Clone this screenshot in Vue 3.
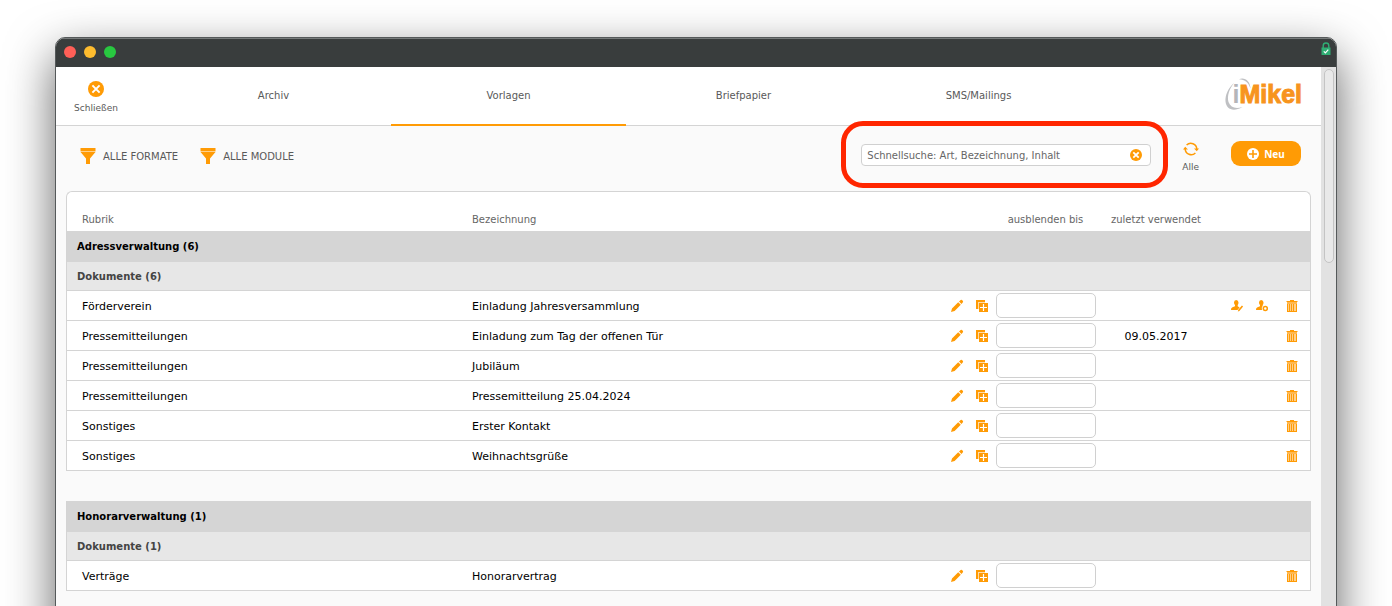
<script setup>
import { ref } from 'vue'

const tabs = ['Archiv', 'Vorlagen', 'Briefpapier', 'SMS/Mailings']
const active = ref('Vorlagen')
const query = ref('')

const sections = [
  {
    title: 'Adressverwaltung (6)',
    sub: 'Dokumente (6)',
    rows: [
      { rubric: 'Förderverein', name: 'Einladung Jahresversammlung', used: '', people: true },
      { rubric: 'Pressemitteilungen', name: 'Einladung zum Tag der offenen Tür', used: '09.05.2017' },
      { rubric: 'Pressemitteilungen', name: 'Jubiläum', used: '' },
      { rubric: 'Pressemitteilungen', name: 'Pressemitteilung 25.04.2024', used: '' },
      { rubric: 'Sonstiges', name: 'Erster Kontakt', used: '' },
      { rubric: 'Sonstiges', name: 'Weihnachtsgrüße', used: '' },
    ],
  },
  {
    title: 'Honorarverwaltung (1)',
    sub: 'Dokumente (1)',
    rows: [{ rubric: 'Verträge', name: 'Honorarvertrag', used: '' }],
  },
]
</script>

<template>
  <div class="desktop">
    <div class="window">
      <div class="titlebar">
        <span class="dot red"></span>
        <span class="dot yellow"></span>
        <span class="dot green"></span>
        <svg class="lock" width="10" height="14" viewBox="0 0 10 14">
          <path d="M2.2 6V3.8a2.8 2.8 0 0 1 5.6 0V6" fill="none" stroke="#2fae74" stroke-width="1.4" />
          <rect x="0.5" y="5.5" width="9" height="7.5" fill="#2fae74" />
          <path d="M2.8 9.3l1.6 1.6 2.9-3.2" fill="none" stroke="#fff" stroke-width="1.2" />
        </svg>
      </div>

      <div class="body">
        <main class="page">
          <header class="head">
            <button class="close" type="button">
              <svg width="16" height="16" viewBox="0 0 16 16">
                <circle cx="8" cy="8" r="8" fill="#ff9b05" />
                <path d="M4.4 4.4l7.2 7.2M11.6 4.4l-7.2 7.2" stroke="#fff" stroke-width="2" />
              </svg>
              <span>Schließen</span>
            </button>
            <nav class="tabs">
              <a
                v-for="t in tabs"
                :key="t"
                href="#"
                class="tab"
                :class="{ active: t === active }"
                @click.prevent="active = t"
              >{{ t }}</a>
            </nav>
            <div class="brand">
              <div class="logo">
                <svg class="swoosh" width="28" height="36" viewBox="0 0 28 36">
                  <path d="M14 2.200C20 0 25 4 25.500 11.500C23.500 5.500 20 2.500 14 2.200Z" fill="#bfc0c3" />
                  <path d="M9 6C3 11 0 18.500 .5 24.500C1.200 32 8 35.500 17.500 30C10.500 32.300 5.500 30.500 3.500 25C1.800 19 4.500 11.500 9 6Z" fill="#bfc0c3" />
                </svg>
                <span class="logo-i">i</span><span class="logo-m">Mikel</span>
              </div>
            </div>
          </header>

          <section class="toolbar">
            <button v-for="f in ['ALLE FORMATE', 'ALLE MODULE']" :key="f" class="filter" type="button">
              <svg width="16" height="16" viewBox="0 0 16 16">
                <path d="M0.500 0h15v3h-15zM0.500 4h15L10 10.500V16H6v-5.500z" fill="#ff9b05" />
                <path d="M0.500 3h15v1h-15z" fill="#ffd08a" />
              </svg>
              <span>{{ f }}</span>
            </button>
            <div class="search">
              <input v-model="query" type="text" aria-label="Schnellsuche" placeholder="Schnellsuche: Art, Bezeichnung, Inhalt" />
              <button class="clear" type="button" aria-label="Suche löschen" @click="query = ''">
                <svg width="12" height="12" viewBox="0 0 12 12">
                  <circle cx="6" cy="6" r="6" fill="#ff9b05" />
                  <path d="M3.300 3.300l5.400 5.400M8.700 3.300l-5.400 5.400" stroke="#fff" stroke-width="1.800" />
                </svg>
              </button>
              <div class="marker"></div>
            </div>
            <button class="all" type="button">
              <svg width="16" height="14" viewBox="0 0 16 14" fill="none" stroke="#ff9b05" stroke-width="1.500">
                <path d="M3.600 3A6 6 0 0 1 13.800 7M12.400 11A6 6 0 0 1 2.200 7" />
                <path d="M0 7.400L2.200 4.800 5 7.400zM16 6.600L13.800 9.200 11 6.600z" fill="#ff9b05" stroke="none" />
              </svg>
              <span>Alle</span>
            </button>
            <button class="new" type="button">
              <svg width="12" height="12" viewBox="0 0 12 12">
                <circle cx="6" cy="6" r="6" fill="#fff" />
                <path d="M6 2v8M2 6h8" stroke="#ff9b05" stroke-width="1.600" />
              </svg>
              <span>Neu</span>
            </button>
          </section>

          <table class="list">
            <colgroup>
              <col class="c-rubric" /><col /><col class="c-icon" /><col class="c-icon" /><col class="c-hide" />
              <col class="c-used" /><col class="c-person" /><col class="c-icon" /><col class="c-trash" />
            </colgroup>
            <thead>
              <tr>
                <th class="text">Rubrik</th>
                <th class="text">Bezeichnung</th>
                <th colspan="2"></th>
                <th>ausblenden bis</th>
                <th>zuletzt verwendet</th>
                <th colspan="3"></th>
              </tr>
            </thead>
            <tbody v-for="(s, si) in sections" :key="s.title">
              <tr v-if="si" class="gap"><td colspan="9"></td></tr>
              <tr class="group"><th colspan="9">{{ s.title }}</th></tr>
              <tr class="sub"><th colspan="9">{{ s.sub }}</th></tr>
              <tr v-for="(r, i) in s.rows" :key="i" class="row">
                <td class="text">{{ r.rubric }}</td>
                <td class="text">{{ r.name }}</td>
                <td>
                  <button type="button" aria-label="Bearbeiten">
                    <svg width="14" height="14" viewBox="0 0 14 14" fill="#ff9b05">
                      <path d="M1 13l1-3.600L8.200 3.200l2.600 2.600L4.600 12zM9 2.500L10.700.9q.7-.4 1.300.2l.9.9q.5.600 0 1.300L11.500 5z" />
                    </svg>
                  </button>
                </td>
                <td>
                  <button type="button" aria-label="Duplizieren">
                    <svg width="14" height="14" viewBox="0 0 14 14">
                      <path d="M1 1h9v2H3v7H1z" fill="#ff9b05" />
                      <path d="M3 3h7v1H4v6H3z" fill="#ffdca8" />
                      <rect x="4" y="4" width="9" height="9" fill="#ff9b05" />
                      <path d="M8.500 5v7M5 8.500h7" stroke="#fff" stroke-width="1.200" />
                    </svg>
                  </button>
                </td>
                <td><input type="text" :aria-label="'ausblenden bis – ' + r.name" /></td>
                <td class="used">{{ r.used }}</td>
                <td class="person">
                  <button v-if="r.people" type="button" aria-label="Person bearbeiten">
                    <svg width="14" height="14" viewBox="0 0 14 14" fill="#ff9b05">
                      <path d="M4 3.500Q4 1 6.200 1T8.500 3.500Q8.500 5 7.700 6v1.300L9.600 8.400 7.500 11H1Q.8 8.800 2.500 8.300L5 7.300V6Q4 5 4 3.500z" />
                      <path d="M7.800 12.500l.5-1.700 3.600-4.300 1.200 1.100-3.700 4.300z" />
                    </svg>
                  </button>
                </td>
                <td>
                  <button v-if="r.people" type="button" aria-label="Person einstellen">
                    <svg width="14" height="14" viewBox="0 0 14 14" fill="#ff9b05">
                      <path d="M4 3.500Q4 1 6.200 1T8.500 3.500Q8.500 5 7.700 6v.8Q6.200 8.500 7 11H1Q.8 8.800 2.500 8.300L5 7.300V6Q4 5 4 3.500z" />
                      <circle cx="10.300" cy="9.500" r="2" fill="none" stroke="#ff9b05" stroke-width="1.500" />
                    </svg>
                  </button>
                </td>
                <td>
                  <button type="button" aria-label="Löschen">
                    <svg width="14" height="14" viewBox="0 0 14 14">
                      <path d="M5 1h4v1h3.500v1h-11V2H5z" fill="#ff9b05" />
                      <path d="M2 4h10v9H2z" fill="#ffcf8a" />
                      <path d="M2.500 4v9M4.500 4v9M6.500 4v9M8.500 4v9M11.500 4v9M2 12.500h10" stroke="#ff9b05" fill="none" />
                      <path d="M2 3h10v2H2z" fill="#ffb850" />
                    </svg>
                  </button>
                </td>
              </tr>
            </tbody>
          </table>
        </main>
        <div class="scroll"><div class="thumb"></div></div>
      </div>
    </div>
  </div>
</template>

<style>
body {
  background: #fff;
}
</style>

<style scoped>
* {
  box-sizing: border-box;
}
.desktop {
  height: 100vh;
  overflow: hidden;
  padding: 37px 55px 0;
  font-family: Verdana, "DejaVu Sans", sans-serif;
  font-size: 11px;
  color: #000;
}
button {
  border: 0;
  padding: 0;
  background: none;
  font: inherit;
  color: inherit;
}
svg {
  display: block;
}
.window {
  height: 100vh;
  display: flex;
  flex-direction: column;
  border: 1px solid #55595a;
  border-radius: 10px;
  overflow: hidden;
  background: #fafafa;
  box-shadow: 0 18px 48px rgba(0, 0, 0, 0.62);
}
.titlebar {
  flex: none;
  height: 29px;
  display: flex;
  align-items: center;
  gap: 8px;
  padding: 0 5px 2px 8px;
  background: #393d3d;
  border-top: 1px solid #777b7b;
}
.dot {
  width: 12px;
  height: 12px;
  border-radius: 50%;
}
.red { background: #ff5f57; }
.yellow { background: #febc2e; }
.green { background: #28c840; }
.lock {
  margin: 0 0 6px auto;
}
.body {
  flex: 1;
  display: flex;
}
.page {
  flex: 1;
  min-width: 0;
}
.head {
  height: 59px;
  display: flex;
  background: #fff;
  border-bottom: 1px solid #d4d4d4;
  color: #595959;
}
.close {
  width: 80px;
  margin-right: 20px;
  padding-top: 3px;
  display: flex;
  flex-direction: column;
  align-items: center;
  justify-content: center;
  gap: 6px;
  font-size: 9px;
  line-height: 11px;
}
.tabs {
  flex: 1;
  display: flex;
}
.tab {
  flex: 1;
  height: 59px;
  display: flex;
  align-items: center;
  justify-content: center;
  border-bottom: 2px solid transparent;
  font-size: 10px;
  color: inherit;
  text-decoration: none;
}
.tab.active {
  border-color: #ff9b05;
}
.brand {
  width: 225px;
  padding: 10px 19px 0 0;
  display: flex;
  justify-content: flex-end;
}
.logo {
  position: relative;
  height: 36px;
  line-height: 34px;
  font-family: "Liberation Sans", Arial, sans-serif;
  font-size: 25px;
  font-weight: bold;
}
.swoosh {
  position: absolute;
  left: -8px;
  top: 0;
}
.logo-i {
  position: relative;
  color: #b4b5b9;
}
.logo-m {
  position: relative;
  color: #f7941e;
  -webkit-text-stroke: 1px #f7941e;
}
.toolbar {
  height: 65px;
  padding: 0 20px 0 24px;
  display: flex;
  align-items: flex-start;
  color: #595959;
}
.filter {
  display: flex;
  align-items: center;
  gap: 7px;
  height: 16px;
  margin: 22px 22px 0 0;
  font-size: 10px;
}
.search {
  position: relative;
  width: 290px;
  margin: 18px 31px 0 auto;
}
.search input {
  display: block;
  width: 100%;
  height: 22px;
  padding: 0 30px 0 5px;
  border: 1px solid #d0d0d0;
  border-radius: 4px;
  background: #fff;
  font: inherit;
  font-size: 10px;
  color: #444;
}
.search input::placeholder {
  color: #666;
  opacity: 1;
}
.clear {
  position: absolute;
  right: 9px;
  top: 5px;
}
.marker {
  position: absolute;
  inset: -23px -17px -22px -20px;
  border: 5px solid #ff2600;
  border-radius: 22px;
  pointer-events: none;
}
.all {
  margin: 16px 32px 0 0;
  display: flex;
  flex-direction: column;
  align-items: center;
  gap: 6px;
  font-size: 9px;
  line-height: 11px;
}
.new {
  width: 70px;
  height: 25px;
  margin-top: 15px;
  display: flex;
  align-items: center;
  justify-content: center;
  gap: 5px;
  border-radius: 9px;
  background: #ff9b05;
  color: #fff;
  font-family: "Noto Sans", sans-serif;
  font-size: 10px;
  font-weight: bold;
}
.list {
  width: calc(100% - 20px);
  margin: 0 10px;
  table-layout: fixed;
  border-collapse: separate;
  border-spacing: 0;
}
.c-rubric { width: 391px; }
.c-icon { width: 25px; }
.c-hide { width: 101px; }
.c-used { width: 120px; }
.c-person { width: 34px; }
.c-trash { width: 36px; }
th,
td {
  padding: 0;
  text-align: center;
}
thead th {
  height: 40px;
  padding-top: 16px;
  border-top: 1px solid #d4d4d4;
  background: #fff;
  font-size: 10px;
  font-weight: normal;
  color: #666;
}
th.text,
td.text {
  text-align: left;
  padding-left: 15px;
}
tr > :first-child {
  border-left: 1px solid #d4d4d4;
}
tr > :last-child {
  border-right: 1px solid #d4d4d4;
}
thead th:first-child { border-top-left-radius: 6px; }
thead th:last-child { border-top-right-radius: 6px; }
.group th,
.sub th {
  padding-left: 10px;
  text-align: left;
  font-size: 10px;
}
.group th {
  height: 31px;
  background: #d5d5d5;
}
.sub th {
  height: 29px;
  background: #e7e7e7;
  border-bottom: 1px solid #d4d4d4;
  color: #444;
}
.gap td {
  height: 30px;
  border: 0;
}
.row td {
  height: 30px;
  background: #fff;
  border-bottom: 1px solid #d4d4d4;
}
.row .text,
.row .used {
  padding-top: 2px;
}
.row svg {
  margin: 0 auto;
}
.row button {
  display: block;
  margin: 0 auto;
}
.row .person {
  padding-left: 8px;
}
.row input {
  display: block;
  width: 100px;
  height: 25px;
  margin-left: 1px;
  padding: 0 5px;
  border: 1px solid #d0d0d0;
  border-radius: 5px;
  background: #fff;
  font: inherit;
}
.scroll {
  width: 15px;
  padding: 2px 2px 0 3px;
  background: #e2e2e2;
}
.thumb {
  height: 194px;
  border: 1px solid #c4c4c4;
  border-radius: 5px;
  background: #e9e9e9;
}
</style>
